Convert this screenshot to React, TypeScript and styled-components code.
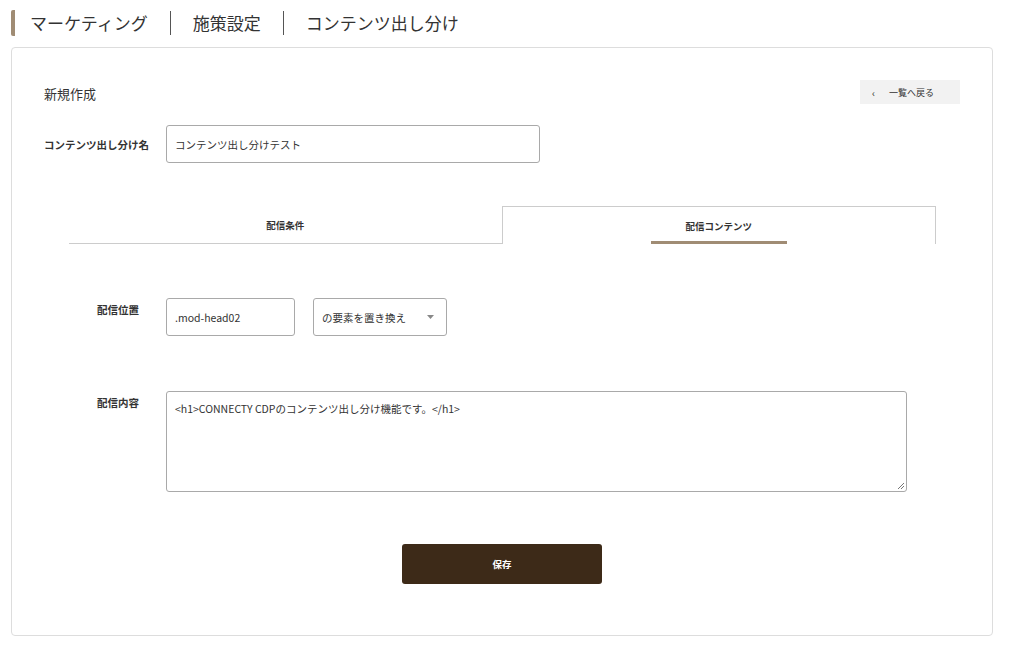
import React from "react";
import styled, { createGlobalStyle } from "styled-components";

const Global = createGlobalStyle`
  body { margin: 0; background: #fff; font-family: "Noto Sans CJK JP", "Noto Sans", sans-serif; color: #333; }
`;

const Page = styled.div`
  padding: 10px 22px 0 11px;
  width: 1015px;
  box-sizing: border-box;
`;
const Header = styled.div`
  display: flex;
  align-items: center;
  height: 26px;
  border-left: 4px solid #a08c74;
  border-radius: 2px;
  padding-left: 15px;
  font-size: 17px;
  color: #333;
`;
const Crumb = styled.span<{ $first?: boolean }>`
  padding: 0 ${p => (p.$first ? "22px" : "22px")} 0 ${p => (p.$first ? "0" : "22px")};
  border-left: ${p => (p.$first ? "none" : "1px solid #555")};
  line-height: 24px;
`;
const Card = styled.div`
  margin-top: 11px;
  border: 1px solid #ddd;
  border-radius: 4px;
  height: 589px;
  box-sizing: border-box;
  padding: 32px 32px 0 32px;
`;
const TopRow = styled.div`
  display: flex;
  justify-content: space-between;
  align-items: center;
  height: 24px;
`;
const Title = styled.div`
  font-size: 13px;
  color: #333;
  margin-top: 2px;
`;
const BackBtn = styled.button`
  width: 100px;
  height: 24px;
  background: #f2f2f2;
  border: none;
  font-family: inherit;
  font-size: 9px;
  color: #333;
  display: flex;
  align-items: center;
  padding: 0 0 0 12px;
  gap: 14px;
  margin-right: 0;
`;
const Row = styled.div<{ $labelW: number; $mt: number }>`
  display: flex;
  align-items: flex-start;
  margin-top: ${p => p.$mt}px;
  padding-left: ${p => 122 - p.$labelW}px;
`;
const Label = styled.div<{ $w: number; $center?: boolean }>`
  width: ${p => p.$w}px;
  font-size: 10.5px;
  font-weight: 700;
  color: #333;
  padding-top: ${p => (p.$center ? "12px" : "4px")};
  flex-shrink: 0;
`;
const Input = styled.div<{ $w: number }>`
  width: ${p => p.$w}px;
  height: 38px;
  box-sizing: border-box;
  border: 1px solid #a9a9a9;
  border-radius: 3px;
  font-size: 10.5px;
  display: flex;
  align-items: center;
  padding-left: 8px;
  color: #333;
`;
const Select = styled(Input)`
  justify-content: space-between;
  padding-right: 12px;
  margin-left: 18px;
`;
const Tabs = styled.div`
  display: flex;
  margin: 43px 24px 0 25px;
  height: 38px;
`;
const Tab = styled.div<{ $active?: boolean }>`
  flex: 1;
  display: flex;
  justify-content: center;
  align-items: center;
  font-size: 9.5px;
  font-weight: 700;
  color: #333;
  box-sizing: border-box;
  border-bottom: ${p => (p.$active ? "none" : "1px solid #ccc")};
  border: ${p => (p.$active ? "1px solid #ccc" : undefined)};
  border-bottom-width: ${p => (p.$active ? 0 : "1px")};
  position: relative;
`;
const Underline = styled.div`
  position: absolute;
  bottom: 0;
  left: 148px;
  width: 136px;
  height: 3px;
  background: #a08c74;
`;
const Textarea = styled.div`
  width: 741px;
  height: 101px;
  box-sizing: border-box;
  border: 1px solid #a9a9a9;
  border-radius: 3px;
  font-size: 10.5px;
  padding: 9px 8px;
  position: relative;
`;
const Grip = styled.svg`
  position: absolute;
  right: 1px;
  bottom: 1px;
`;
const SaveWrap = styled.div`
  display: flex;
  justify-content: center;
  margin-top: 52px;
`;
const Save = styled.button`
  width: 200px;
  height: 40px;
  background: #3d2a18;
  color: #fff;
  border: none;
  border-radius: 3px;
  font-family: inherit;
  font-size: 9.5px;
  font-weight: 700;
`;

export default function App() {
  return (
    <Page>
      <Global />
      <Header>
        <Crumb $first>マーケティング</Crumb>
        <Crumb>施策設定</Crumb>
        <Crumb>コンテンツ出し分け</Crumb>
      </Header>
      <Card>
        <TopRow>
          <Title>新規作成</Title>
          <BackBtn><span style={{ fontSize: 10 }}>‹</span>一覧へ戻る</BackBtn>
        </TopRow>
        <Row $labelW={122} $mt={21}>
          <Label $w={122} $center>コンテンツ出し分け名</Label>
          <Input $w={374}>コンテンツ出し分けテスト</Input>
        </Row>
        <Tabs>
          <Tab>配信条件</Tab>
          <Tab $active>配信コンテンツ<Underline /></Tab>
        </Tabs>
        <Row $labelW={69} $mt={54}>
          <Label $w={69}>配信位置</Label>
          <Input $w={129}>.mod-head02</Input>
          <Select $w={134}>
            <span>の要素を置き換え</span>
            <svg width="7" height="4" viewBox="0 0 7 4"><path d="M0 0h7L3.5 4z" fill="#888" /></svg>
          </Select>
        </Row>
        <Row $labelW={69} $mt={55}>
          <Label $w={69}>配信内容</Label>
          <Textarea>
            &lt;h1&gt;CONNECTY CDPのコンテンツ出し分け機能です。&lt;/h1&gt;
            <Grip width="8" height="8" viewBox="0 0 8 8"><path d="M7 1L1 7M7 4L4 7" stroke="#777" strokeWidth="1" /></Grip>
          </Textarea>
        </Row>
        <SaveWrap><Save>保存</Save></SaveWrap>
      </Card>
    </Page>
  );
}
